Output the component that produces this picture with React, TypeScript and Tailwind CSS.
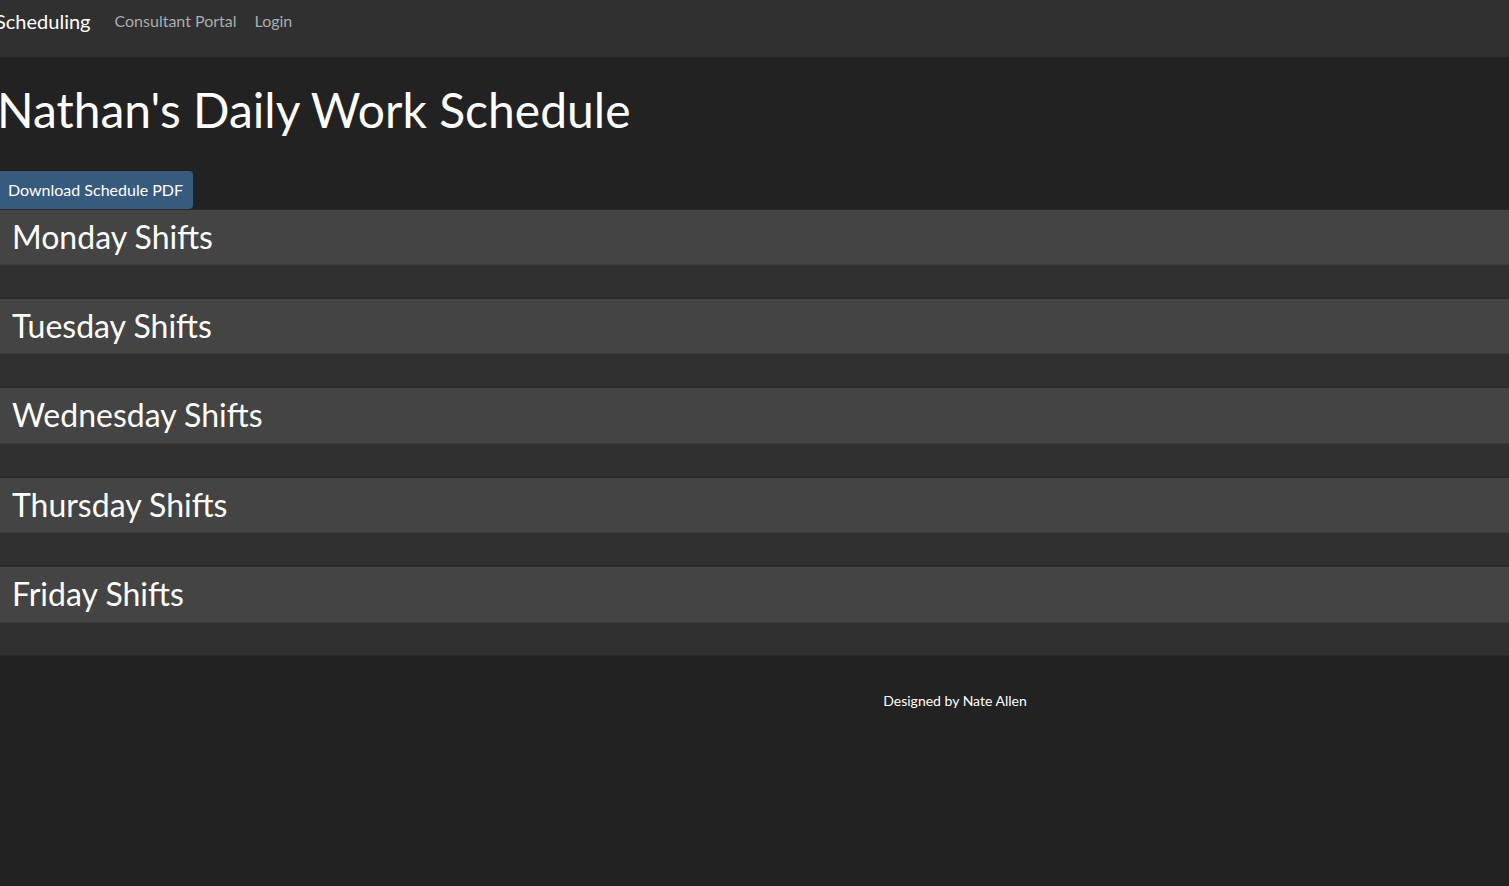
const days = ["Monday", "Tuesday", "Wednesday", "Thursday", "Friday"];

const DayCard = ({ day }: { day: string }) => {
  return (
    <div className="border-y border-black/[0.125] bg-[#303030]">
      <div className="bg-[#444444] border-b border-black/[0.125] px-3 py-2">
        <h2 className="text-[32px] leading-[1.2] text-white">{day} Shifts</h2>
      </div>
      <div className="h-[32px]"></div>
    </div>
  );
};

export default function App() {
  return (
    <div className="min-h-screen bg-[#222222] text-white overflow-hidden" style={{ fontFamily: "Lato, 'Liberation Sans', sans-serif" }}>
      {/* Navbar */}
      <nav className="h-[57px] bg-[#303030] flex items-start">
        <div className="flex items-center h-[30px] mt-[6px] whitespace-nowrap">
          <span className="-ml-[5px] text-[20px] leading-[1.5] text-white mr-[24px]">Scheduling</span>
          <a className="text-[16px] leading-[1.5] text-[#acacac] mr-[18px] cursor-pointer">Consultant Portal</a>
          <a className="text-[16px] leading-[1.5] text-[#acacac] cursor-pointer">Login</a>
        </div>
      </nav>

      <main>
        <h1 className="text-[48px] leading-[1.2] mt-6 mb-8 -ml-[3px] whitespace-nowrap">Nathan's Daily Work Schedule</h1>
        <button className="bg-[#375a7f] text-white text-[16px] leading-[1.5] pl-2 pr-[10px] py-[7px] rounded-r-[4px]">
          Download Schedule PDF
        </button>
        <div className="flex flex-col">
          {days.map((d) => (
            <DayCard key={d} day={d} />
          ))}
        </div>
      </main>

      <footer className="mt-[34px] pl-[401px] text-center text-[14px] leading-[1.5]">
        Designed by Nate Allen
      </footer>
    </div>
  );
}
